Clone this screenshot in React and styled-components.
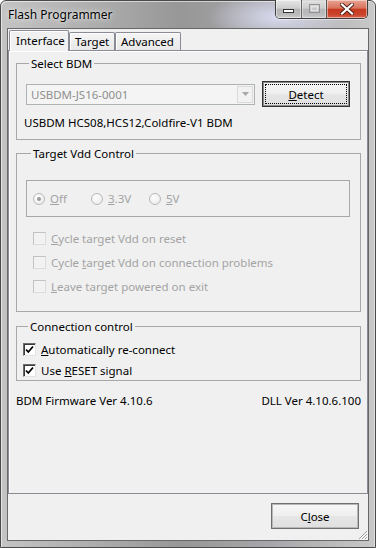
import React from "react";
import styled, { createGlobalStyle } from "styled-components";

const FONT = `"Noto Sans", "Open Sans", "DejaVu Sans", sans-serif`;

const GlobalStyle = createGlobalStyle`
  html, body { margin: 0; padding: 0; background: #ffffff; }
  body { font-family: ${FONT}; font-size: 11.5px; color: #000; }
  * { box-sizing: border-box; }
`;

const Window = styled.div`
  width: 376px;
  height: 548px;
  display: flex;
  flex-direction: column;
  border: 1px solid #4a4a4a;
  border-radius: 6px 6px 0 0;
  padding: 0 6px 6px 6px;
  background:
    radial-gradient(ellipse 70px 26px at 74% 16px, rgba(222, 224, 246, 0.9), rgba(222, 224, 246, 0) 100%),
    linear-gradient(90deg, #c4c4c4 0%, #b0b0b0 22%, #979797 48%, #a7a7ab 72%, #c8c8c8 100%);
  box-shadow: inset 1px 1px 0 rgba(255, 255, 255, 0.55), inset -1px 0 0 rgba(255, 255, 255, 0.45);
`;

const TitleBar = styled.div`
  height: 27px;
  display: flex;
  justify-content: space-between;
  align-items: flex-start;
  padding: 0 1px 0 1px;
`;

const Title = styled.div`
  font-size: 12px;
  line-height: 15px;
  margin-top: 6px;
  color: #000;
  text-shadow: 0 0 6px rgba(255, 255, 255, 0.9), 0 0 2px rgba(255, 255, 255, 0.7);
`;

const Caption = styled.div`
  display: flex;
  margin-top: -1px;
  height: 19px;
  border: 1px solid #3e3e3e;
  border-top: none;
  border-radius: 0 0 5px 5px;
  overflow: hidden;
  box-shadow: 0 1px 0 rgba(255, 255, 255, 0.5);
`;

const CapButton = styled.div`
  width: ${(p) => p.$w}px;
  height: 100%;
  display: flex;
  align-items: center;
  justify-content: center;
  border-left: ${(p) => (p.$first ? "none" : "1px solid #555")};
  background: ${(p) =>
    p.$close
      ? "linear-gradient(#e8a594 0%, #d9735c 45%, #c7391f 52%, #c9432a 80%, #d8684f 100%)"
      : "linear-gradient(#e6e6e6 0%, #cfcfcf 45%, #b5b5b5 52%, #b9b9b9 80%, #cdcdcd 100%)"};
  box-shadow: inset 0 0 0 1px rgba(255, 255, 255, 0.45);
  opacity: ${(p) => (p.$disabled ? 0.85 : 1)};
`;

const Client = styled.div`
  flex: 1;
  display: flex;
  flex-direction: column;
  background: #f0f0f0;
  border: 1px solid #686868;
  padding-top: 1px;
  position: relative;
`;

const TabStrip = styled.div`
  height: 20px;
  display: flex;
  align-items: flex-end;
  padding-left: 1px;
`;

const Tab = styled.div`
  width: ${(p) => p.$w}px;
  height: ${(p) => (p.$active ? 21 : 18)}px;
  margin-bottom: ${(p) => (p.$active ? -1 : 0)}px;
  position: relative;
  z-index: ${(p) => (p.$active ? 1 : 0)};
  border: 1px solid #898c95;
  border-bottom: none;
  border-radius: 2px 2px 0 0;
  background: ${(p) => (p.$active ? "#f0f0f0" : "linear-gradient(#f5f5f5, #e8e8e8)")};
  box-shadow: inset 1px 1px 0 #ffffff;
  padding: ${(p) => (p.$active ? "1px 0 0 6px" : "0 0 0 5px")};
  line-height: 17px;
  white-space: nowrap;
`;

const TabPanel = styled.div`
  flex: 1;
  border: 1px solid #898c95;
  box-shadow: inset 1px 1px 0 #ffffff;
  padding: 5px 6px 0 7px;
  display: flex;
  flex-direction: column;
`;

const Group = styled.fieldset`
  margin: ${(p) => p.$mt}px 0 0 0;
  padding: ${(p) => p.$pad};
  border: 1px solid #a8a8a8;
  min-width: 0;
  min-inline-size: 0;
`;

const Legend = styled.legend`
  padding: 0 2px;
  margin-left: 5px;
  line-height: 15px;
  color: #000;
`;

const BdmRow = styled.div`
  display: flex;
  align-items: center;
  gap: 7px;
`;

const Combo = styled.div`
  width: 229px;
  height: 21px;
  margin-left: 2px;
  display: flex;
  align-items: stretch;
  border: 1px solid #adb2b5;
  background: #f4f4f4;
  padding: 1px;
  color: #8f8f8f;
`;

const ComboText = styled.span`
  flex: 1;
  padding-left: 3px;
  line-height: 17px;
`;

const ComboArrow = styled.span`
  width: 16px;
  border: 1px solid #d9d9d9;
  display: flex;
  align-items: center;
  justify-content: center;
  background: #f2f2f2;
`;

const PushButton = styled.button`
  width: 88px;
  height: ${(p) => p.$h}px;
  padding: 0;
  font: inherit;
  font-size: 11.5px;
  color: #000;
  border: 1px solid ${(p) => (p.$default ? "#333333" : "#707070")};
  border-radius: 0;
  background: linear-gradient(#f7f7f7, #efefef 48%, #e6e6e6 52%, #e0e0e0);
  box-shadow: inset 0 0 0 1px ${(p) => (p.$default ? "#8a8a8a" : "#b8b8b8")};
  outline: ${(p) => (p.$focus ? "1px dotted #000" : "none")};
  outline-offset: -4px;
`;

const Description = styled.div`
  margin-top: 8px;
  line-height: 15px;
`;

const RadioBox = styled.div`
  height: 37px;
  border: 1px solid #a8a8a8;
  display: flex;
  align-items: center;
  padding-left: 6px;
`;

const RadioItem = styled.div`
  width: 58px;
  display: flex;
  align-items: center;
  gap: 5px;
  color: #a3a3a3;
`;

const RadioCircle = styled.span`
  width: 12px;
  height: 12px;
  border-radius: 50%;
  border: 1px solid #b9b9b9;
  background: radial-gradient(circle at 40% 35%, #ffffff, #e6e6e6);
  display: flex;
  align-items: center;
  justify-content: center;
  flex: none;
`;

const RadioDot = styled.span`
  width: 4px;
  height: 4px;
  border-radius: 50%;
  background: #9a9a9a;
`;

const CheckList = styled.div`
  margin-top: ${(p) => p.$mt}px;
  padding-left: ${(p) => p.$pl}px;
  display: flex;
  flex-direction: column;
  gap: ${(p) => p.$gap}px;
`;

const CheckRow = styled.div`
  height: ${(p) => p.$h}px;
  display: flex;
  align-items: center;
  gap: 5px;
  color: ${(p) => (p.$disabled ? "#a3a3a3" : "#000")};
  white-space: nowrap;
`;

const CheckBox = styled.span`
  width: 13px;
  height: 13px;
  flex: none;
  display: flex;
  align-items: center;
  justify-content: center;
  border: 1px solid;
  border-color: ${(p) => (p.$disabled ? "#c2c2c2 #dcdcdc #dcdcdc #c2c2c2" : "#6b6b6b #e3e3e3 #e3e3e3 #6b6b6b")};
  background: ${(p) => (p.$disabled ? "#f2f2f2" : "#ffffff")};
  box-shadow: ${(p) => (p.$disabled ? "none" : "inset 1px 1px 0 #3a3a3a")};
`;

const InfoRow = styled.div`
  margin-top: 12px;
  display: flex;
  justify-content: space-between;
  line-height: 15px;
`;

const Footer = styled.div`
  height: 46px;
  display: flex;
  justify-content: flex-end;
  align-items: flex-start;
  padding: 9px 9px 0 0;
`;

const Grip = styled.svg`
  position: absolute;
  right: 0;
  bottom: 0;
`;

const Check = () => (
  <svg width="9" height="9" viewBox="0 0 9 9">
    <path d="M1 4.5 L3.3 7 L8 1.5" fill="none" stroke="#000" strokeWidth="1.8" />
  </svg>
);

const Radio = ({ checked, label }) => (
  <RadioItem>
    <RadioCircle>{checked && <RadioDot />}</RadioCircle>
    <span>{label}</span>
  </RadioItem>
);

const CheckItem = ({ checked, disabled, h, children }) => (
  <CheckRow $disabled={disabled} $h={h}>
    <CheckBox $disabled={disabled}>{checked && <Check />}</CheckBox>
    <span>{children}</span>
  </CheckRow>
);

export default function App() {
  return (
    <>
      <GlobalStyle />
      <Window>
        <TitleBar>
          <Title>Flash Programmer</Title>
          <Caption>
            <CapButton $w={25} $first>
              <svg width="11" height="10" viewBox="0 0 11 10">
                <rect x="0.5" y="5.5" width="10" height="3" fill="#fff" stroke="#333" />
              </svg>
            </CapButton>
            <CapButton $w={25} $disabled>
              <svg width="11" height="10" viewBox="0 0 11 10">
                <rect x="0.5" y="0.5" width="10" height="8" fill="none" stroke="#8a8a8a" />
                <rect x="2.5" y="2.5" width="6" height="4" fill="none" stroke="#e8e8e8" strokeWidth="1.5" />
              </svg>
            </CapButton>
            <CapButton $w={41} $close>
              <svg width="14" height="12" viewBox="0 0 14 12">
                <path d="M2 1.5 L12 10.5 M12 1.5 L2 10.5" stroke="#4a2018" strokeWidth="4" strokeLinecap="square" />
                <path d="M2 1.5 L12 10.5 M12 1.5 L2 10.5" stroke="#ffffff" strokeWidth="2.2" strokeLinecap="square" />
              </svg>
            </CapButton>
          </Caption>
        </TitleBar>
        <Client>
          <TabStrip>
            <Tab $w={60} $active>Interface</Tab>
            <Tab $w={46}>Target</Tab>
            <Tab $w={66}>Advanced</Tab>
          </TabStrip>
          <TabPanel>
            <Group $mt={0} $pad="10px 9px 9px 7px">
              <Legend>Select BDM</Legend>
              <BdmRow>
                <Combo>
                  <ComboText>USBDM-JS16-0001</ComboText>
                  <ComboArrow>
                    <svg width="7" height="4" viewBox="0 0 7 4">
                      <path d="M0 0 L7 0 L3.5 4 Z" fill="#a8a8a8" />
                    </svg>
                  </ComboArrow>
                </Combo>
                <PushButton $h={26} $default $focus>
                  <u>D</u>etect
                </PushButton>
              </BdmRow>
              <Description>USBDM HCS08,HCS12,Coldfire-V1 BDM</Description>
            </Group>

            <Group $mt={6} $pad="19px 10px 13px 9px">
              <Legend>Target Vdd Control</Legend>
              <RadioBox>
                <Radio checked label={<><u>O</u>ff</>} />
                <Radio label={<><u>3</u>.3V</>} />
                <Radio label={<><u>5</u>V</>} />
              </RadioBox>
              <CheckList $mt={9} $pl={7} $gap={0}>
                <CheckItem disabled h={24}>
                  <u>C</u>ycle target Vdd on reset
                </CheckItem>
                <CheckItem disabled h={24}>
                  Cycle <u>t</u>arget Vdd on connection problems
                </CheckItem>
                <CheckItem disabled h={24}>
                  <u>L</u>eave target powered on exit
                </CheckItem>
              </CheckList>
            </Group>

            <Group $mt={7} $pad="5px 9px 0 6px">
              <Legend>Connection control</Legend>
              <CheckList $mt={0} $pl={0} $gap={1}>
                <CheckItem checked h={20}>
                  <u>A</u>utomatically re-connect
                </CheckItem>
                <CheckItem checked h={20}>
                  Use <u>R</u>ESET signal
                </CheckItem>
              </CheckList>
            </Group>

            <InfoRow>
              <span>BDM Firmware Ver 4.10.6</span>
              <span>DLL Ver 4.10.6.100</span>
            </InfoRow>
          </TabPanel>
          <Footer>
            <PushButton $h={26}>
              C<u>l</u>ose
            </PushButton>
          </Footer>
          <Grip width="12" height="12" viewBox="0 0 12 12">
            <path d="M11 3 L3 11 M11 6 L6 11 M11 9 L9 11" stroke="#a0a0a0" strokeWidth="1" />
            <path d="M12 4 L4 12 M12 7 L7 12 M12 10 L10 12" stroke="#ffffff" strokeWidth="1" />
          </Grip>
        </Client>
      </Window>
    </>
  );
}
